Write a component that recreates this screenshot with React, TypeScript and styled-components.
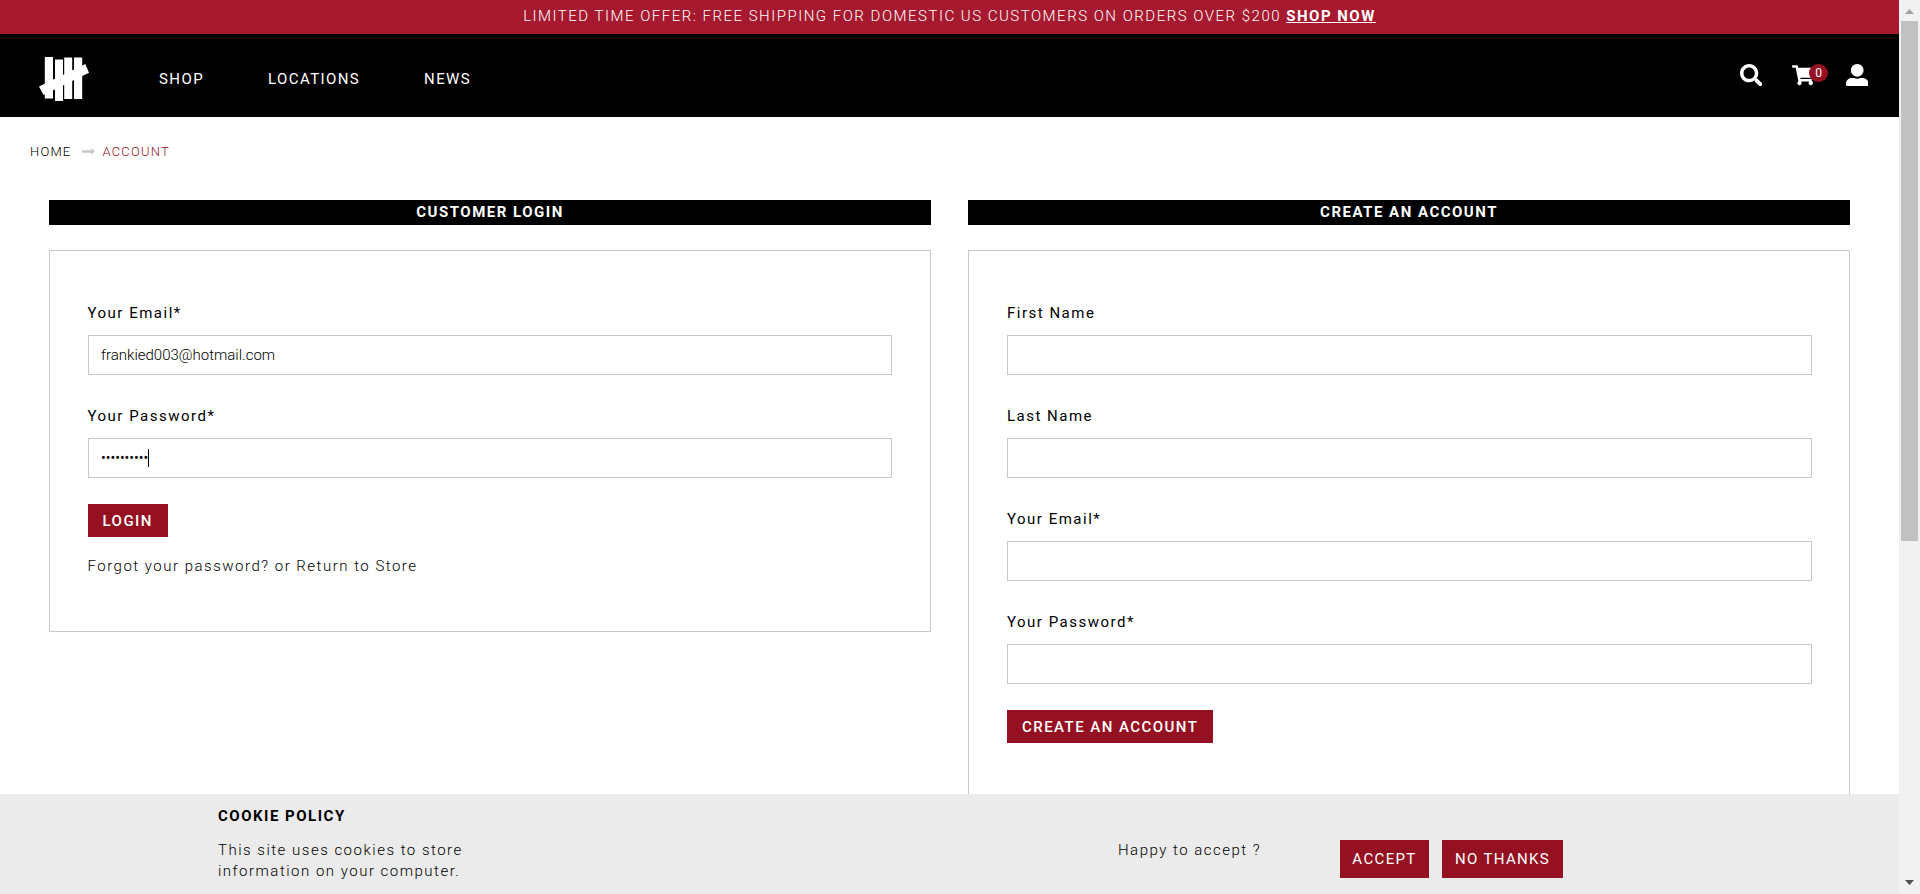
import React from "react";
import styled, { createGlobalStyle } from "styled-components";
import { FaSearch, FaShoppingCart, FaUserAlt } from "react-icons/fa";

const Global = createGlobalStyle`
  *, *::before, *::after { box-sizing: border-box; }
  html, body { margin: 0; padding: 0; overflow: hidden; }
  body {
    background: #fff;
    color: #000;
    font-family: Roboto, sans-serif;
    font-size: 15px;
    font-weight: 300;
    letter-spacing: 1.5px;
    line-height: 21px;
  }
`;

const Viewport = styled.div`
  display: flex;
  height: 894px;
  overflow: hidden;
`;

const Page = styled.div`
  display: flex;
  flex-direction: column;
  flex: 1;
  min-width: 0;
`;

const Banner = styled.div`
  flex: none;
  height: 34px;
  background: #a6192e;
  color: #fff;
  text-align: center;
  line-height: 32px;
`;

const BannerLink = styled.a`
  color: #fff;
  font-weight: 700;
  text-decoration: underline;
`;

const Header = styled.header`
  flex: none;
  display: flex;
  align-items: center;
  height: 83px;
  padding: 0 31px 0 38px;
  background: #000;
  color: #fff;
`;

const Nav = styled.nav`
  display: flex;
  flex: 1;
  gap: 64px;
  margin-left: 69px;
  padding-top: 7px;
  font-weight: 400;
  letter-spacing: 1.4px;
`;

const Actions = styled.div`
  display: flex;
  align-items: flex-start;
  height: 23px;
  margin-bottom: 1px;
  font-size: 22.5px;
`;

const Action = styled.span<{ $gap?: number }>`
  position: relative;
  display: flex;
  margin-left: ${(p) => p.$gap ?? 0}px;
`;

const Badge = styled.span`
  position: absolute;
  left: 17px;
  top: 0;
  width: 19px;
  height: 18px;
  border-radius: 50%;
  background: #951121;
  font-size: 12px;
  font-weight: 400;
  line-height: 18px;
  letter-spacing: 0;
  text-align: center;
`;

const Crumbs = styled.div`
  flex: none;
  display: flex;
  align-items: center;
  height: 83px;
  padding: 0 30px 14px;
  font-size: 13px;
  letter-spacing: 1.2px;
`;

const Current = styled.span`
  color: #951121;
`;

const Arrow = styled.svg`
  margin: 0 7.5px 0 10.5px;
`;

const Columns = styled.main`
  flex: 1;
  min-height: 0;
  display: grid;
  grid-template-columns: 882px 882px;
  column-gap: 37px;
  padding-left: 49px;
  overflow: hidden;
`;

const Heading = styled.h2`
  height: 25px;
  margin: 0 0 25px;
  background: #000;
  color: #fff;
  font-size: 15px;
  font-weight: 700;
  line-height: 24px;
  text-align: center;
`;

const Panel = styled.form<{ $height: number; $padding: string }>`
  height: ${(p) => p.$height}px;
  padding: ${(p) => p.$padding};
  border: 1px solid #c8c8c8;
`;

const Field = styled.label`
  display: block;
  margin-bottom: 31px;
  font-weight: 400;
`;

const Box = styled.span`
  display: flex;
  align-items: center;
  height: 40px;
  margin-top: 11px;
  padding-left: 12.5px;
  border: 1px solid #c8c8c8;
  font-weight: 300;
  letter-spacing: 0;
`;

const Dots = styled.span`
  width: 47px;
  font-size: 14px;
  font-weight: 400;
  letter-spacing: 0;
  white-space: nowrap;
`;

const Caret = styled.span`
  width: 1px;
  height: 18px;
  background: #000;
`;

const Submit = styled.button<{ $width: number }>`
  display: block;
  width: ${(p) => p.$width}px;
  height: 33px;
  margin-top: -5px;
  padding: 1px 0 0 15px;
  border: 0;
  background: #951121;
  color: #fff;
  font: 500 15px/32px Roboto, sans-serif;
  letter-spacing: 1.46px;
  text-align: left;
`;

const Hint = styled.p`
  margin: 19px 0 0;
`;

const CookieBar = styled.section`
  flex: none;
  display: flex;
  height: 100px;
  padding: 12px 0 0 218px;
  background: #ebebeb;
`;

const CookieText = styled.div`
  width: 900px;
`;

const CookieTitle = styled.h3`
  margin: 0 0 13px;
  font-size: 15px;
  font-weight: 700;
  line-height: 21px;
`;

const CookieCopy = styled.p`
  width: 270px;
  margin: 0;
`;

const Question = styled.span`
  width: 222px;
  padding-top: 34px;
`;

const Choice = styled.button<{ $width: number }>`
  width: ${(p) => p.$width}px;
  height: 38px;
  margin: 34px 13px 0 0;
  padding: 0;
  border: 0;
  background: #951121;
  color: #fff;
  font: 400 15px/37px Roboto, sans-serif;
  letter-spacing: 1.35px;
`;

const Scrollbar = styled.div`
  display: flex;
  flex-direction: column;
  align-items: center;
  width: 21px;
  background: #f1f1f1;
`;

const Thumb = styled.div`
  width: 17px;
  height: 520px;
  margin: 7px 0 auto;
  background: #c1c1c1;
`;

const ArrowUp = styled.svg`
  margin-top: 9px;
`;

const ArrowDown = styled.svg`
  margin-bottom: 9px;
`;

function Logo() {
  return (
    <svg width="52" height="51" viewBox="0 0 52 51" fill="#fff">
      <path d="M6.800 7H15v41.600H6.800zM17 9.500h8V51h-8zM26.200 7.500h8V49h-8zM36 7.500h8.200V49H36z" />
      <path d="M1 36.500 47.300 14 51 22.700 5.500 45z" />
    </svg>
  );
}

function FormField({ label, children }: { label: string; children?: React.ReactNode }) {
  return (
    <Field>
      {label}
      <Box>{children}</Box>
    </Field>
  );
}

export default function App() {
  return (
    <>
      <Global />
      <Viewport>
        <Page>
          <Banner>
            <span>LIMITED TIME OFFER: FREE SHIPPING FOR DOMESTIC US CUSTOMERS ON ORDERS OVER $200 </span>
            <BannerLink>SHOP NOW</BannerLink>
          </Banner>
          <Header>
            <Logo />
            <Nav>
              <span>SHOP</span>
              <span>LOCATIONS</span>
              <span>NEWS</span>
            </Nav>
            <Actions>
              <Action><FaSearch /></Action>
              <Action $gap={30}>
                <FaShoppingCart />
                <Badge>0</Badge>
              </Action>
              <Action $gap={31}><FaUserAlt /></Action>
            </Actions>
          </Header>
          <Crumbs>
            <span>HOME</span>
            <Arrow width="13" height="7" viewBox="0 0 13 7" fill="#c8c8c8">
              <path d="M0 2.200h9V0.200l4 3.300-4 3.300v-2H0z" />
            </Arrow>
            <Current>ACCOUNT</Current>
          </Crumbs>
          <Columns>
            <section>
              <Heading>CUSTOMER LOGIN</Heading>
              <Panel $height={382} $padding="52px 38px 0 37.5px">
                <FormField label="Your Email*">frankied003@hotmail.com</FormField>
                <FormField label="Your Password*">
                  <Dots>••••••••••</Dots>
                  <Caret />
                </FormField>
                <Submit type="button" $width={80}>LOGIN</Submit>
                <Hint>Forgot your password? or Return to Store</Hint>
              </Panel>
            </section>
            <section>
              <Heading>CREATE AN ACCOUNT</Heading>
              <Panel $height={600} $padding="52px 37px 0 38px">
                <FormField label="First Name" />
                <FormField label="Last Name" />
                <FormField label="Your Email*" />
                <FormField label="Your Password*" />
                <Submit type="button" $width={206}>CREATE AN ACCOUNT</Submit>
              </Panel>
            </section>
          </Columns>
          <CookieBar>
            <CookieText>
              <CookieTitle>COOKIE POLICY</CookieTitle>
              <CookieCopy>This site uses cookies to store information on your computer.</CookieCopy>
            </CookieText>
            <Question>Happy to accept ?</Question>
            <Choice $width={89}>ACCEPT</Choice>
            <Choice $width={121}>NO THANKS</Choice>
          </CookieBar>
        </Page>
        <Scrollbar>
          <ArrowUp width="9" height="5" viewBox="0 0 9 5" fill="#a3a3a3"><path d="M0 5 4.500 0 9 5z" /></ArrowUp>
          <Thumb />
          <ArrowDown width="9" height="5" viewBox="0 0 9 5" fill="#505050"><path d="M0 0h9L4.500 5z" /></ArrowDown>
        </Scrollbar>
      </Viewport>
    </>
  );
}
